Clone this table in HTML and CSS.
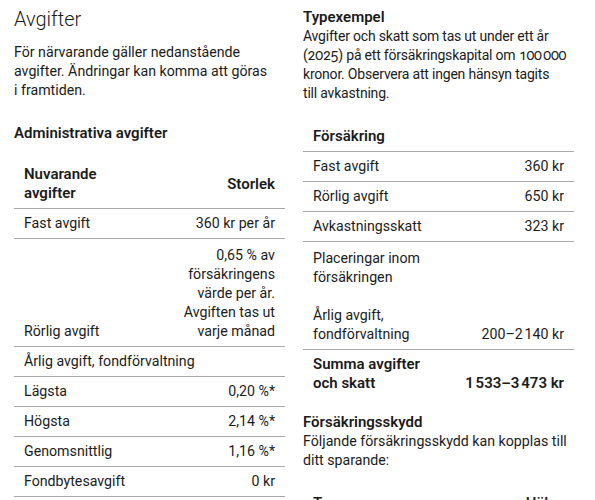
FILE: index.html
```html
<!DOCTYPE html>
<html lang="sv">
<head>
    <meta charset="UTF-8">
    <meta name="viewport" content="width=device-width, initial-scale=1.0">
    <title>Avgifter</title>
    <link rel="stylesheet" href="styles.css">
</head>
<body>
    <div class="page">
        <section class="col">
            <h2 class="title">Avgifter</h2>
            <p class="intro">För närvarande gäller nedanstående avgifter. Ändringar kan komma att göras i&nbsp;framtiden.</p>
            <h3 class="subtitle">Administrativa avgifter</h3>
            <table class="fees">
                <thead>
                    <tr>
                        <th class="label">Nuvarande<br>avgifter</th>
                        <th class="value">Storlek</th>
                    </tr>
                </thead>
                <tbody>
                    <tr>
                        <td>Fast avgift</td>
                        <td class="value">360 kr per år</td>
                    </tr>
                    <tr class="tall">
                        <td>Rörlig avgift</td>
                        <td class="value">0,65&nbsp;% av<br>försäkringens<br>värde per år.<br>Avgiften tas ut<br>varje månad</td>
                    </tr>
                    <tr>
                        <td colspan="2">Årlig avgift, fondförvaltning</td>
                    </tr>
                    <tr>
                        <td>Lägsta</td>
                        <td class="value">0,20&nbsp;%*</td>
                    </tr>
                    <tr>
                        <td>Högsta</td>
                        <td class="value">2,14&nbsp;%*</td>
                    </tr>
                    <tr>
                        <td>Genomsnittlig</td>
                        <td class="value">1,16&nbsp;%*</td>
                    </tr>
                    <tr>
                        <td>Fondbytesavgift</td>
                        <td class="value">0 kr</td>
                    </tr>
                </tbody>
            </table>
        </section>

        <section class="col right">
            <h3 class="subtitle">Typexempel</h3>
            <p class="intro wide">Avgifter och skatt som tas ut under ett år <span class="oldstyle">(2025)</span> på ett försäkringskapital om <span class="oldstyle">100&#8239;000</span> kronor. Observera att ingen hänsyn tagits<br>till avkastning.</p>
            <table class="fees example">
                <thead>
                    <tr>
                        <th class="label">Försäkring</th>
                        <th class="value"></th>
                    </tr>
                </thead>
                <tbody>
                    <tr>
                        <td>Fast avgift</td>
                        <td class="value">360 kr</td>
                    </tr>
                    <tr>
                        <td>Rörlig avgift</td>
                        <td class="value">650 kr</td>
                    </tr>
                    <tr>
                        <td>Avkastningsskatt</td>
                        <td class="value">323 kr</td>
                    </tr>
                    <tr class="tall">
                        <td>Placeringar inom<br>försäkringen<br><br>Årlig avgift,<br>fondförvaltning</td>
                        <td class="value">200–2&#8239;140 kr</td>
                    </tr>
                    <tr class="sum">
                        <td>Summa avgifter<br>och skatt</td>
                        <td class="value">1&#8239;533–3&#8239;473 kr</td>
                    </tr>
                </tbody>
            </table>

            <h3 class="subtitle">Försäkringsskydd</h3>
            <p class="intro">Följande försäkringsskydd kan kopplas till ditt sparande:</p>
            <table class="fees example">
                <thead>
                    <tr>
                        <th class="label">Typ</th>
                        <th class="value">Hälsa</th>
                    </tr>
                </thead>
            </table>
        </section>
    </div>
</body>
</html>
```

FILE: styles.css
```css
* {
    margin: 0;
    padding: 0;
    box-sizing: border-box;
}

body {
    font-family: Roboto, 'Liberation Sans', sans-serif;
    font-size: 14.2px;
    line-height: 19px;
    color: #1b1b1b;
    background: #fff;
    overflow: hidden;
}

.page {
    display: grid;
    grid-template-columns: 271px 271px;
    gap: 18px;
    padding: 4px 0 0 14px;
}

.title {
    font-size: 20px;
    line-height: 30px;
    font-weight: 300;
}

.col > .intro {
    margin-top: 9px;
}

.col > .wide {
    width: 276px;
    font-size: 14px;
    letter-spacing: -0.2px;
}

.col > .subtitle {
    font-size: 15px;
    font-weight: 600;
    margin-top: 24px;
}

.right > .subtitle:first-child {
    margin-top: 4px;
}

.right > .subtitle + .intro {
    margin-top: 0;
}

.oldstyle {
    font-variant-numeric: oldstyle-nums;
}

.fees {
    width: 100%;
    border-collapse: collapse;
    margin-top: 17px;
}

.right > .fees {
    margin-top: 19px;
}

.fees th {
    font-size: 15px;
    font-weight: 600;
    text-align: left;
    vertical-align: middle;
    padding: 5px 10px;
    border-bottom: 1px solid #a8a8a8;
}

.fees td {
    text-align: left;
    vertical-align: bottom;
    padding: 5px 10px;
    border-bottom: 1px solid #a8a8a8;
}

.fees .tall td {
    padding-top: 7px;
}

.fees .value {
    text-align: right;
}

.fees .sum td {
    font-size: 15px;
    font-weight: 600;
    border-bottom: none;
}

.right > .fees + .subtitle {
    margin-top: 15px;
}
```
